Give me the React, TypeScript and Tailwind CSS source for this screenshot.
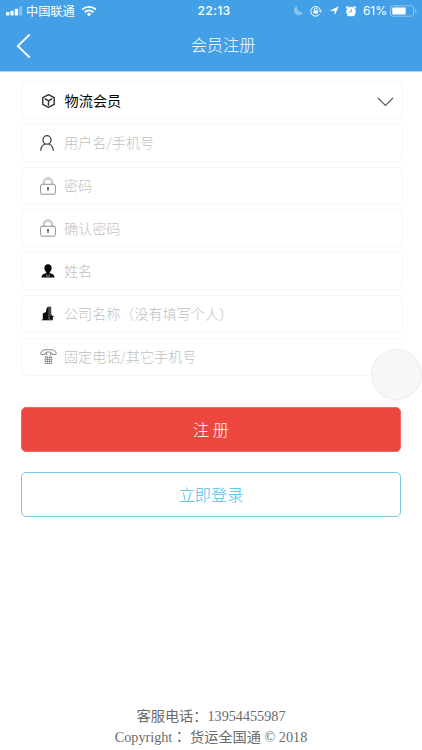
import type { ReactNode } from 'react';

const BoxIcon = () => (
  <svg width="15" height="16" viewBox="0 0 16 16" fill="none" stroke="#333" strokeWidth="1.5" strokeLinejoin="round">
    <path d="M8 1.2 14.1 4.4V11.6L8 14.8 1.9 11.6V4.4ZM4 5.4 8 7.8 12 5.4M8 7.8V13" />
  </svg>
);

const UserIcon = () => (
  <svg width="16" height="16" viewBox="0 0 16 16" fill="none" stroke="#444" strokeWidth="1.3" strokeLinecap="round">
    <ellipse cx="7" cy="4.9" rx="4" ry="4.3" />
    <path d="M.7 15.2C1 12.3 2.8 9.8 5.2 9M13.3 15.2C13 12.3 11.2 9.8 8.8 9" />
  </svg>
);

const LockIcon = () => (
  <svg width="16" height="18" viewBox="0 0 16 18" fill="none" stroke="#888" strokeWidth="0.9">
    <rect x=".6" y="7.3" width="14.8" height="9.9" rx="1.5" />
    <path d="M3.1 7.2V5.5a4.9 4.9 0 0 1 9.8 0V7.2M4.5 7.2V5.5a3.5 3.5 0 0 1 7 0V7.2" strokeWidth="0.6" />
    <path d="M8 10.6v3.4" stroke="#444" strokeWidth="1" />
    <circle cx="8" cy="11.2" r=".9" fill="#333" stroke="none" />
  </svg>
);

const PersonIcon = () => (
  <svg width="14" height="14" viewBox="0 0 14 14" fill="#080808">
    <ellipse cx="7" cy="4.2" rx="3.6" ry="4" />
    <path d="M5.200 7h3.600v2l3.200 1.200q1.400.7 1.600 3.300H.4Q.6 10.900 2 10.200L5.200 9Z" />
    <path d="M5.500 10.200 6.200 13M8.500 10.200 7.800 13" stroke="#ddd" strokeWidth=".6" />
  </svg>
);

const CompanyIcon = () => (
  <svg width="14" height="15" viewBox="0 0 14 15" fill="#0b0b0b">
    <path d="M1.800 14V7.500L5.300 5.800V14Z" />
    <path d="M4.500 14 5.300 3 6.800 .8H7.800V14Z" />
    <path d="M7.500 12V.7H10.200V9Z" fill="#444" />
    <path d="m10.200 8.300.9 1.500 1.900.3-1.300 1.300.3 2.300H8.400V10l1.200-.2Z" />
    <path d="M.8 13.900h10.700" stroke="#111" strokeWidth=".8" />
  </svg>
);

const PhoneIcon = () => (
  <svg width="17" height="15" viewBox="0 0 17 15" fill="none" stroke="#777" strokeWidth=".9">
    <path d="M5 5.500H1.300Q.5 5.500.8 4.300C2 .4 5.300.7 8.500.7S15 .4 16.200 4.300q.3 1.200-.5 1.200H12C12 3.100 10.500 3.100 8.500 3.100S5 3.100 5 5.500Z" />
    <path d="M6.500 3.500v3L5.200 8V14.500h6.600V8L10.500 6.500v-3M5.200 8.400h6.600M5.200 10.400h6.600M5.200 12.400h6.600M7.400 7.300v7M9.600 7.300v7" strokeWidth=".7" />
  </svg>
);

const fields: { label: string; icon: ReactNode }[] = [
  { label: '用户名/手机号', icon: <UserIcon /> },
  { label: '密码', icon: <LockIcon /> },
  { label: '确认密码', icon: <LockIcon /> },
  { label: '姓名', icon: <PersonIcon /> },
  { label: '公司名称（没有填写个人）', icon: <CompanyIcon /> },
  { label: '固定电话/其它手机号', icon: <PhoneIcon /> },
];

function StatusBar() {
  return (
    <div className="grid h-[21px] grid-cols-[1fr_auto_1fr] items-center pl-[6px] pr-[5px]">
      <div className="flex items-center">
        <svg width="17" height="10" viewBox="0 0 17 10" fill="white">
          <rect y="6" width="3.3" height="3.5" rx=".8" />
          <rect x="4.400" y="4.700" width="3.3" height="4.800" rx=".8" />
          <rect x="8.800" y="2.800" width="3.3" height="6.700" rx=".8" />
          <rect x="13.200" y=".3" width="3" height="9.200" rx=".8" opacity=".35" />
        </svg>
        <span className="ml-[3px] text-[12.2px] leading-[20px]">中国联通</span>
        <svg className="ml-[6px]" width="16" height="12" viewBox="0 0 16 12" fill="none" stroke="white" strokeWidth="1.900">
          <path d="M1.200 4.500a10 10 0 0 1 13.600 0M3.700 7.200a6.300 6.300 0 0 1 8.600 0" />
          <path d="M8 11.300 5.700 9a3.400 3.400 0 0 1 4.600 0Z" fill="white" stroke="none" />
        </svg>
      </div>
      <span className="pl-[5px] font-['Inter',sans-serif] text-[12.2px] font-medium leading-[20px] tracking-[0.3px]">22:13</span>
      <div className="flex items-center justify-end">
        <svg width="10" height="11" viewBox="0 0 10 11" fill="white" opacity=".38">
          <path d="M3.300.7A4.900 4.900 0 1 0 9.400 7.300 5.200 5.200 0 0 1 3.300.7Z" />
        </svg>
        <svg className="ml-[6px]" width="12" height="12" viewBox="0 0 12 12" fill="none" stroke="white" strokeWidth="1">
          <path d="M9.700 8.800A4.800 4.800 0 1 1 10.300 5.500" />
          <path d="M8.600 5.500h3.400L10.300 7.600Z" fill="white" stroke="none" />
          <rect x="3.500" y="5.500" width="4.400" height="3.100" fill="white" stroke="none" />
          <path d="M4.400 5.500V4.300a1.300 1.300 0 0 1 2.600 0V5.500" />
        </svg>
        <svg className="ml-[7px]" width="10" height="10" viewBox="0 0 10 10" fill="white"><path d="M9.800.3 5.600 9.500V4.700H.5Z" /></svg>
        <svg className="ml-[6px]" width="12" height="12" viewBox="0 0 12 12" fill="none" stroke="white">
          <circle cx="6" cy="6.600" r="4.300" fill="white" />
          <path d="M1 3.300 3.400 1.200M11 3.300 8.600 1.200M2.500 11 3.500 10M9.500 11 8.500 10" strokeWidth="1.500" />
          <path d="M6.300 4v2.900H4" stroke="#43a0e7" strokeWidth=".9" />
        </svg>
        <span className="ml-[6px] font-['Inter',sans-serif] text-[12px] leading-[20px]">61%</span>
        <svg className="ml-[3px]" width="27" height="12" viewBox="0 0 27 12" fill="none">
          <rect x=".5" y=".8" width="23" height="10.400" rx="2.200" stroke="white" opacity=".4" />
          <path d="M25 4v4q1.700-.7 1.700-2T25 4Z" fill="white" opacity=".4" />
          <rect x="2.300" y="2.500" width="13.300" height="7" rx=".7" fill="white" />
        </svg>
      </div>
    </div>
  );
}

export default function App() {
  return (
    <main className="relative flex h-[750px] w-[422px] flex-col overflow-hidden bg-white font-['Noto_Sans_CJK_SC',sans-serif]">
      <header className="h-[72px] shrink-0 border-b border-[#b0d3ef] bg-[#43a0e7] text-white">
        <StatusBar />
        <div className="grid h-[47px] grid-cols-[46px_1fr_22px] items-center">
          <svg className="ml-[16px] mt-[3px]" width="16" height="26" viewBox="0 0 16 26" fill="none" stroke="white" strokeWidth="1.8">
            <path d="M13.700 1.500 1.800 13 13.700 24.500" />
          </svg>
          <h1 className="pb-[2px] text-center text-[16.2px] font-light leading-[24px]">会员注册</h1>
        </div>
      </header>

      <form className="flex flex-col pl-[21px] pr-[19px] pt-[9px]">
        <div className="flex flex-col gap-[4.8px]">
          <div className="flex h-[38px] items-center rounded-[5px] border border-[#f8f8f8] text-[14.2px] text-black">
            <span className="ml-[18px] flex w-[17px] justify-center pt-px"><BoxIcon /></span>
            <span className="ml-[7.5px] leading-[20px]">物流会员</span>
            <svg className="ml-auto mr-[8px] mt-[4px]" width="17" height="10" viewBox="0 0 17 10" fill="none" stroke="#555" strokeWidth="1.100">
              <path d="m1 1 7.500 7.500L16 1" />
            </svg>
          </div>
          {fields.map((field) => (
            <div key={field.label} className="flex h-[38px] items-center rounded-[5px] border border-[#f8f8f8] text-[14.1px] font-light text-[#bfbfbf]">
              <span className="ml-[17.500px] flex w-[17px] justify-center">{field.icon}</span>
              <span className="ml-[7.500px] pb-[1.400px] leading-[20px]">{field.label}</span>
            </div>
          ))}
        </div>
        <button type="button" className="mt-[31px] h-[45px] w-[380px] rounded-[5px] border border-[#ef655f] bg-[#ed463f] pb-px text-[16.2px] font-light text-white">注 册</button>
        <button type="button" className="mt-[20px] h-[45px] w-[380px] rounded-[5px] border border-[#79c9e7] text-[16.2px] font-light text-[#42bee8]">立即登录</button>
      </form>

      <footer className="mt-auto pb-[2px] text-center font-['Liberation_Serif','Noto_Sans_CJK_SC',serif] text-[14.2px] leading-[21px] text-[#6a6a6a]">
        <p>客服电话：13954455987</p>
        <p>Copyright<span className="font-['Noto_Sans_CJK_TC',sans-serif] leading-none" lang="zh-TW">：</span> 货运全国通 © 2018</p>
      </footer>

      <div className="absolute left-[371px] top-[349px] size-[51px] rounded-full border border-[#e4e4e4]/60 bg-[#efefef]/50" />
    </main>
  );
}
